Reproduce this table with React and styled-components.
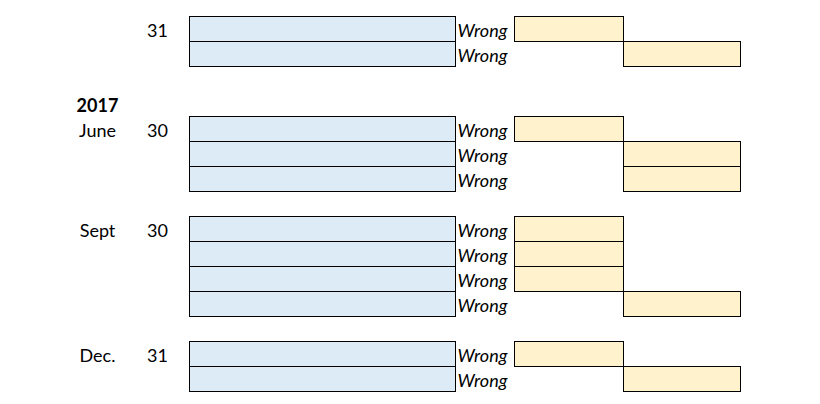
import styled, { createGlobalStyle } from "styled-components";

const GlobalStyle = createGlobalStyle`
	body {
		margin: 0;
		background: #ffffff;
		font-family: Lato, "Open Sans", sans-serif;
		color: #000000;
	}
`;

const Sheet = styled.table`
	margin: 16px 0 0 60px;
	border-collapse: collapse;
	table-layout: fixed;
	width: 680px;
	font-size: 18px;
`;

const Row = styled.tr`
	height: 25px;
`;

const fills = {
	blue: "#ddebf7",
	yellow: "#fff2cc",
};

const Cell = styled.td`
	height: 25px;
	padding: 0 0 0 ${(p) => p.$pad || 0}px;
	box-sizing: border-box;
	vertical-align: bottom;
	line-height: 23px;
	white-space: nowrap;
	text-align: ${(p) => p.$align || "left"};
	font-weight: ${(p) => (p.$bold ? 700 : 400)};
	font-style: ${(p) => (p.$italic ? "italic" : "normal")};
	background: ${(p) => (p.$fill ? fills[p.$fill] : "transparent")};
	border: ${(p) => (p.$fill ? "1px solid #000" : "none")};
`;

// which box each "Wrong" row points at: E = first yellow column, F = second
const rows = [
	{ day: "31", target: "E" },
	{ target: "F" },
	null,
	{ year: "2017" },
	{ month: "June", day: "30", target: "E" },
	{ target: "F" },
	{ target: "F" },
	null,
	{ month: "Sept", day: "30", target: "E" },
	{ target: "E" },
	{ target: "E" },
	{ target: "F" },
	null,
	{ month: "Dec.", day: "31", target: "E" },
	{ target: "F" },
];

function SheetRow({ row }) {
	if (!row) {
		return (
			<Row>
				<Cell colSpan={6} />
			</Row>
		);
	}
	if (row.year) {
		return (
			<Row>
				<Cell $align="center" $bold>
					{row.year}
				</Cell>
				<Cell colSpan={5} />
			</Row>
		);
	}
	return (
		<Row>
			<Cell $align="center">{row.month}</Cell>
			<Cell $pad={12}>{row.day}</Cell>
			<Cell $fill="blue" />
			<Cell $italic $pad={2}>
				Wrong
			</Cell>
			<Cell $fill={row.target === "E" ? "yellow" : null} />
			<Cell $fill={row.target === "F" ? "yellow" : null} />
		</Row>
	);
}

export default function App() {
	return (
		<>
			<GlobalStyle />
			<Sheet>
				<colgroup>
					<col style={{ width: 75 }} />
					<col style={{ width: 54 }} />
					<col style={{ width: 266 }} />
					<col style={{ width: 59 }} />
					<col style={{ width: 109 }} />
					<col style={{ width: 117 }} />
				</colgroup>
				<tbody>
					{rows.map((row, i) => (
						<SheetRow key={i} row={row} />
					))}
				</tbody>
			</Sheet>
		</>
	);
}
